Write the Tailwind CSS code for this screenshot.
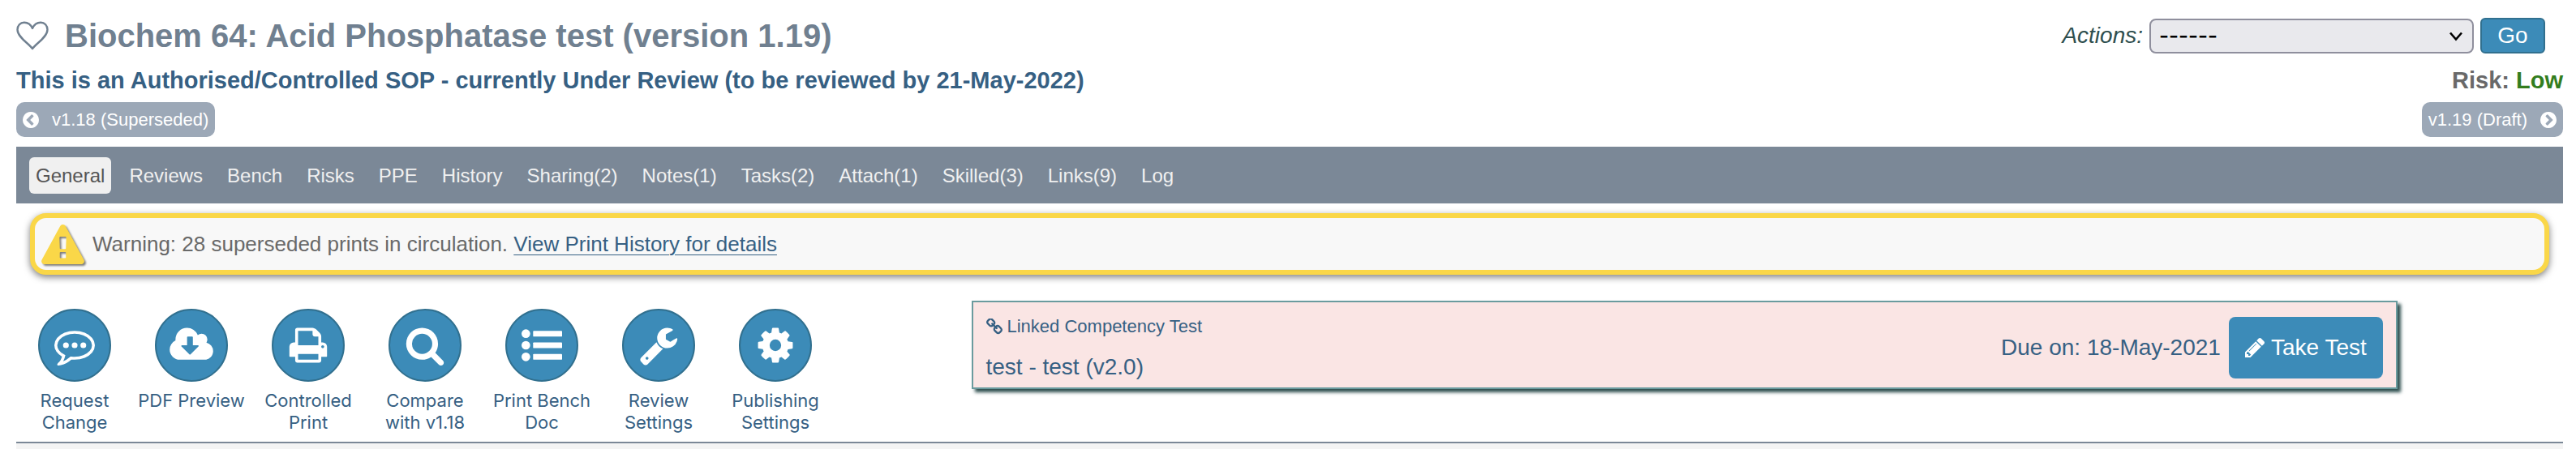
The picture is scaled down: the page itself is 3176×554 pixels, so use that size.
<!DOCTYPE html>
<html lang="en">
<head>
    <meta charset="UTF-8">
    <meta name="viewport" content="width=device-width, initial-scale=1.0" />
    <title>Biochem 64: Acid Phosphatase test</title>
    <script src="https://cdn.jsdelivr.net/npm/@tailwindcss/browser@4"></script>
</head>
<body class="bg-white min-h-screen flex flex-col pl-5 pr-4 pt-5 font-['Liberation_Sans',Arial,sans-serif] text-[#366083]">
    <!-- Title and actions -->
    <header class="flex h-12 items-center justify-between">
        <div class="flex items-center gap-5">
            <button type="button" aria-label="Add to favourites" class="text-[#708090]">
                <svg class="w-10 h-9" viewBox="0 0 40 36" fill="none" stroke="currentColor" stroke-width="2.4" stroke-linejoin="round"><path d="M20 34C16 28 1.500 20 1.500 10.500C1.500 5.500 5 1.800 9.800 1.800C14.500 1.800 18 4.500 20 9C22 4.500 25.500 1.800 30.200 1.800C35 1.800 38.500 5.500 38.500 10.500C38.500 20 24 28 20 34Z"/></svg>
            </button>
            <h1 class="text-[40px] leading-[48px] font-bold text-[#708090]">Biochem 64: Acid Phosphatase test (version 1.19)</h1>
        </div>
        <form class="flex items-center gap-2 pr-[22px]">
            <label for="actions" class="text-[28px] italic text-[#2f4f4f]">Actions:</label>
            <div class="relative">
                <select id="actions" name="actions" class="block w-[400px] h-[43px] appearance-none rounded-lg border-2 border-[#8f8f9d] bg-[#e9e9ed] pl-[10px] font-[Inter,sans-serif] text-[26px] leading-none font-medium text-black">
                    <option>------</option>
                </select>
                <svg class="pointer-events-none absolute right-[14px] top-4 w-4 h-3" viewBox="0 0 16 12" fill="none" stroke="black" stroke-width="2.6"><path d="M1 1.500L8 9.500L15 1.500"/></svg>
            </div>
            <button type="button" class="w-20 h-11 rounded-md border-2 border-[#31708f] bg-[#3c8bb8] text-[28px] leading-none text-white">Go</button>
        </form>
    </header>

    <!-- Status line -->
    <div class="mt-3 flex justify-between text-[29px] leading-[38px] font-bold">
        <p>This is an Authorised/Controlled SOP - currently Under Review (to be reviewed by 21-May-2022)</p>
        <p class="text-[#696969]">Risk: <span class="text-[#327d1e]">Low</span></p>
    </div>

    <!-- Version links -->
    <div class="mt-2 flex justify-between text-[22px] leading-[43px] text-white">
        <a href="#" class="flex items-center gap-4 rounded-[10px] bg-[#9ca8b7] px-2">
            <svg class="w-5 h-5" viewBox="128 128 1536 1536" fill="currentColor"><path d="M1037 1395l102-102q19-19 19-45t-19-45l-307-307 307-307q19-19 19-45t-19-45l-102-102q-19-19-45-19t-45 19l-454 454q-19 19-19 45t19 45l454 454q19 19 45 19t45-19zm627-499q0 209-103 385.5t-279.5 279.5-385.5 103-385.5-103-279.5-279.5-103-385.5 103-385.5 279.5-279.5 385.5-103 385.5 103 279.5 279.5 103 385.5z"/></svg>
            v1.18 (Superseded)
        </a>
        <a href="#" class="flex items-center gap-4 rounded-[10px] bg-[#9ca8b7] px-2">
            v1.19 (Draft)
            <svg class="w-5 h-5 rotate-180" viewBox="128 128 1536 1536" fill="currentColor"><path d="M1037 1395l102-102q19-19 19-45t-19-45l-307-307 307-307q19-19 19-45t-19-45l-102-102q-19-19-45-19t-45 19l-454 454q-19 19-19 45t19 45l454 454q19 19 45 19t45-19zm627-499q0 209-103 385.5t-279.5 279.5-385.5 103-385.5-103-279.5-279.5-103-385.5 103-385.5 279.5-279.5 385.5-103 385.5 103 279.5 279.5 103 385.5z"/></svg>
        </a>
    </div>

    <!-- Tabs -->
    <nav class="mt-3 flex h-[70px] items-center gap-[14px] bg-[#7b8897] px-4 text-[24px] leading-[45px] text-[#f0f0f0]">
        <a href="#" class="rounded-md bg-[#f0f0f0] px-2 text-[#555555]">General</a>
        <a href="#" class="px-2">Reviews</a>
        <a href="#" class="px-2">Bench</a>
        <a href="#" class="px-2">Risks</a>
        <a href="#" class="px-2">PPE</a>
        <a href="#" class="px-2">History</a>
        <a href="#" class="px-2">Sharing(2)</a>
        <a href="#" class="px-2">Notes(1)</a>
        <a href="#" class="px-2">Tasks(2)</a>
        <a href="#" class="px-2">Attach(1)</a>
        <a href="#" class="px-2">Skilled(3)</a>
        <a href="#" class="px-2">Links(9)</a>
        <a href="#" class="px-2">Log</a>
    </nav>

    <!-- Print warning -->
    <div class="mx-[17px] mt-3 flex h-[76px] items-center gap-[10px] rounded-[20px] border-[6px] border-[#fad748] bg-[#f8f8f8] pl-2 text-[26px] text-[#696969] shadow-[0_3px_8px_rgba(0,0,0,0.5)]">
        <svg class="w-[53px] h-[49px] drop-shadow-[2px_2px_1px_rgba(0,0,0,0.5)]" viewBox="0 0 1792 1664" fill="#fad748"><path d="M1024 1375v-190q0-14-9.5-23.500t-22.500-9.500h-192q-13 0-22.500 9.500t-9.500 23.500v190q0 14 9.500 23.500t22.500 9.500h192q13 0 22.500-9.500t9.500-23.500zm-2-374l18-459q0-12-10-19-13-11-24-11h-220q-11 0-24 11-10 7-10 21l17 457q0 10 10 16.500t24 6.500h185q14 0 23.500-6.500t10.500-16.500zm-14-934l768 1408q35 63-2 126-17 29-46.500 46t-63.500 17h-1536q-34 0-63.500-17t-46.500-46q-37-63-2-126l768-1408q17-31 47-49t65-18 65 18 47 49z"/></svg>
        <p>Warning: 28 superseded prints in circulation. <a href="#" class="text-[#366083] underline decoration-1 underline-offset-4">View Print History for details</a></p>
    </div>

    <div class="flex items-start">
        <!-- Toolbar -->
        <div class="mt-[42px] flex w-3/8 text-center font-[Inter,sans-serif] text-[22px] leading-[27px]">
            <a href="#" class="flex w-36 flex-col items-center gap-[10px]">
                <span class="flex size-[90px] items-center justify-center rounded-full border-2 border-[#31708f] bg-[#3c8bb8] text-white">
                    <svg class="size-[50px]" viewBox="0 0 1792 1792" fill="currentColor"><path d="M896 384q-204 0-381.500 69.500t-282 187.500-104.500 255q0 112 71.500 213.500t201.500 175.500l87 50-27 96q-24 91-70 172 152-63 275-171l43-38 57 6q69 8 130 8 204 0 381.500-69.500t282-187.500 104.500-255-104.500-255-282-187.500-381.500-69.500zm896 512q0 174-120 321.500t-326 233-450 85.500q-70 0-145-8-198 175-460 242-49 14-114 22h-5q-15 0-27-10.500t-16-27.500v-1q-3-4-.5-12t2-10 4.500-9.500l6-9 7-8.500 8-9q7-8 31-34.500t34.500-38 31-39.500 32.500-51 27-59 26-76q-157-89-247.500-220t-90.500-281q0-174 120-321.500t326-233 450-85.500 450 85.500 326 233 120 321.500z"/><circle cx="512" cy="896" r="128"/><circle cx="896" cy="896" r="128"/><circle cx="1280" cy="896" r="128"/></svg>
                </span>
                <span>Request<br>Change</span>
            </a>
            <a href="#" class="flex w-36 flex-col items-center gap-[10px]">
                <span class="flex size-[90px] items-center justify-center rounded-full border-2 border-[#31708f] bg-[#3c8bb8] text-white">
                    <svg class="w-[54px] h-[50px]" viewBox="-64 0 1920 1792" fill="currentColor"><path d="M1216 928q0-14-9-23t-23-9h-224v-352q0-13-9.500-22.500t-22.500-9.500h-192q-13 0-22.500 9.500t-9.500 22.500v352h-224q-13 0-22.500 9.500t-9.500 22.500q0 14 9 23l352 352q9 9 23 9t23-9l351-351q10-12 10-24zm640 224q0 159-112.500 271.500t-271.500 112.500h-1088q-185 0-316.500-131.500t-131.500-316.500q0-130 70-240t188-165q-2-30-2-43 0-212 150-362t362-150q156 0 285.500 87t188.500 231q71-62 166-62 106 0 181 75t75 181q0 76-41 138 130 31 213.500 135.500t83.500 238.500z"/></svg>
                </span>
                <span>PDF Preview</span>
            </a>
            <a href="#" class="flex w-36 flex-col items-center gap-[10px]">
                <span class="flex size-[90px] items-center justify-center rounded-full border-2 border-[#31708f] bg-[#3c8bb8] text-white">
                    <svg class="size-[50px]" viewBox="0 0 1792 1792" fill="currentColor"><path d="M448 1536h896v-256h-896v256zm0-640h896v-384h-160q-40 0-68-28t-28-68v-160h-640v640zm1152 64q0-26-19-45t-45-19-45 19-19 45 19 45 45 19 45-19 19-45zm128 0v416q0 13-9.500 22.500t-22.500 9.500h-224v160q0 40-28 68t-68 28h-960q-40 0-68-28t-28-68v-160h-224q-13 0-22.500-9.500t-9.500-22.500v-416q0-79 56.500-135.500t135.500-56.500h64v-544q0-40 28-68t68-28h672q40 0 88 20t76 48l152 152q28 28 48 76t20 88v256h64q79 0 135.500 56.500t56.500 135.500z"/></svg>
                </span>
                <span>Controlled<br>Print</span>
            </a>
            <a href="#" class="flex w-36 flex-col items-center gap-[10px]">
                <span class="flex size-[90px] items-center justify-center rounded-full border-2 border-[#31708f] bg-[#3c8bb8] text-white">
                    <svg class="size-[50px]" viewBox="0 0 1792 1792" fill="currentColor"><path d="M1216 832q0-185-131.500-316.500t-316.500-131.500-316.500 131.500-131.500 316.500 131.500 316.500 316.500 131.500 316.500-131.500 131.500-316.500zm512 832q0 52-38 90t-90 38q-54 0-90-38l-343-342q-179 124-399 124-143 0-273.500-55.500t-225-150-150-225-55.500-273.500 55.500-273.500 150-225 225-150 273.500-55.500 273.500 55.500 225 150 150 225 55.500 273.500q0 220-124 399l343 343q37 37 37 90z"/></svg>
                </span>
                <span>Compare<br>with v1.18</span>
            </a>
            <a href="#" class="flex w-36 flex-col items-center gap-[10px]">
                <span class="flex size-[90px] items-center justify-center rounded-full border-2 border-[#31708f] bg-[#3c8bb8] text-white">
                    <svg class="size-[50px]" viewBox="0 0 1792 1792" fill="currentColor"><circle cx="192" cy="384" r="192"/><circle cx="192" cy="896" r="192"/><circle cx="192" cy="1408" r="192"/><rect x="512" y="256" width="1280" height="256" rx="32"/><rect x="512" y="768" width="1280" height="256" rx="32"/><rect x="512" y="1280" width="1280" height="256" rx="32"/></svg>
                </span>
                <span>Print Bench<br>Doc</span>
            </a>
            <a href="#" class="flex w-36 flex-col items-center gap-[10px]">
                <span class="flex size-[90px] items-center justify-center rounded-full border-2 border-[#31708f] bg-[#3c8bb8] text-white">
                    <svg class="size-[50px]" viewBox="0 0 1792 1792" fill="currentColor"><path d="M448 1472q0-26-19-45t-45-19-45 19-19 45 19 45 45 19 45-19 19-45zm644-420l-682 682q-37 37-90 37-52 0-91-37l-106-108q-38-36-38-90 0-53 38-91l681-681q39 98 114.500 173.500t173.500 114.500zm634-435q0 39-23 106-47 134-164.500 217.500t-258.500 83.500q-185 0-316.500-131.500t-131.500-316.500 131.500-316.500 316.500-131.500q58 0 121.500 16.500t107.500 46.500q16 11 16 28t-16 28l-293 169v224l193 107q5-3 79-48.500t135.500-81 70.500-35.500q15 0 23.500 10t8.500 25z"/></svg>
                </span>
                <span>Review<br>Settings</span>
            </a>
            <a href="#" class="flex w-36 flex-col items-center gap-[10px]">
                <span class="flex size-[90px] items-center justify-center rounded-full border-2 border-[#31708f] bg-[#3c8bb8] text-white">
                    <svg class="size-[50px]" viewBox="0 0 1792 1792" fill="currentColor"><path d="M1152 896q0-106-75-181t-181-75-181 75-75 181 75 181 181 75 181-75 75-181zm512-109v222q0 12-8 23t-20 13l-185 28q-19 54-39 91 35 50 107 138 10 12 10 25t-9 23q-27 37-99 108t-94 71q-12 0-26-9l-138-108q-44 23-91 38-16 136-29 186-7 28-36 28h-222q-14 0-24.500-8.500t-11.500-21.500l-28-184q-49-16-90-37l-141 107q-10 9-25 9-14 0-25-11-126-114-165-168-7-10-7-23 0-12 8-23 15-21 51-66.500t54-70.500q-27-50-41-99l-183-27q-13-2-21-12.500t-8-23.500v-222q0-12 8-23t19-13l186-28q14-46 39-92-40-57-107-138-10-12-10-24 0-10 9-23 26-36 98.500-107.500t94.500-71.500q13 0 26 10l138 107q44-23 91-38 16-136 29-186 7-28 36-28h222q14 0 24.500 8.500t11.500 21.500l28 184q49 16 90 37l142-107q9-9 24-9 13 0 25 10 129 119 165 170 7 8 7 22 0 12-8 23-15 21-51 66.500t-54 70.500q26 50 41 98l183 28q13 2 21 12.500t8 23.500z"/></svg>
                </span>
                <span>Publishing<br>Settings</span>
            </a>
        </div>

        <!-- Linked competency test -->
        <section class="mt-8 flex w-[56%] justify-between border-2 border-[#6a9b9e] bg-[#fae5e4] pt-[18px] pb-[11px] px-4 shadow-[4px_4px_4px_#2f4f4f]">
            <div class="flex flex-col justify-between">
                <p class="flex items-center gap-[6px] text-[22px] leading-6">
                    <svg class="size-5" viewBox="80 80 1632 1632" fill="currentColor"><path d="M1520 1216q0-40-28-68l-208-208q-28-28-68-28-42 0-72 32 3 3 19 18.500t21.500 21.500 15 19 13 25.500 3.500 27.500q0 40-28 68t-68 28q-15 0-27.500-3.500t-25.500-13-19-15-21.500-21.500-18.500-19q-33 31-33 73 0 40 28 68l206 207q27 27 68 27 40 0 68-26l147-146q28-28 28-67zm-703-705q0-40-28-68l-206-207q-28-28-68-28-39 0-68 27l-147 146q-28 28-28 67 0 40 28 68l208 208q27 27 68 27 42 0 72-31-3-3-19-18.500t-21.500-21.500-15-19-13-25.500-3.500-27.500q0-40 28-68t68-28q15 0 27.500 3.500t25.500 13 19 15 21.500 21.500 18.500 19q33-31 33-73zm895 705q0 120-85 203l-147 146q-83 83-203 83-121 0-204-85l-206-207q-83-83-83-203 0-123 88-209l-88-88q-86 88-208 88-120 0-204-84l-208-208q-84-84-84-204t85-203l147-146q83-83 203-83 121 0 204 85l206 207q83 83 83 203 0 123-88 209l88 88q86-88 208-88 120 0 204 84l208 208q84 84 84 204z"/></svg>
                    Linked Competency Test
                </p>
                <p class="text-[28px] leading-7">test - test (v2.0)</p>
            </div>
            <div class="flex items-center gap-[10px] text-[28px]">
                <p>Due on: 18-May-2021</p>
                <button type="button" class="flex h-[76px] w-[190px] items-center justify-center gap-2 rounded-lg bg-[#3c8bb8] text-white">
                    <svg class="size-6" viewBox="128 149 1515 1515" fill="currentColor"><path d="M491 1536l91-91-235-235-91 91v107h128v128h107zm523-928q0-22-22-22-10 0-17 7l-542 542q-7 7-7 17 0 22 22 22 10 0 17-7l542-542q7-7 7-17zm-54-192l416 416-832 832h-416v-416zm683 96q0 53-37 90l-166 166-416-416 166-165q36-38 90-38 53 0 91 38l235 234q37 39 37 91z"/></svg>
                    Take Test
                </button>
            </div>
        </section>
    </div>

    <div class="mt-[10px] grow border-t-2 border-[#7b8897] bg-[#f4f4f4]"></div>
</body>
</html>
